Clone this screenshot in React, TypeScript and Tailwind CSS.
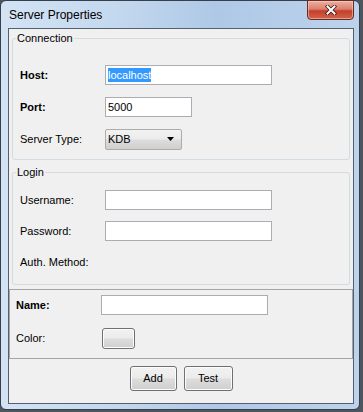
import type { ReactNode } from "react";

function TextBox({ width, children }: { width: string; children?: ReactNode }) {
  return (
    <div className={`flex h-[20px] items-center border border-[#abadb3] bg-white pl-[2px] ${width}`}>
      {children}
    </div>
  );
}

function Row({ label, bold, children }: { label: string; bold?: boolean; children?: ReactNode }) {
  return (
    <div className="flex h-[20px] items-center">
      <span className={`w-[85px] shrink-0 ${bold ? "font-bold" : ""}`}>{label}</span>
      {children}
    </div>
  );
}

function Group({ title, className, children }: { title: string; className: string; children: ReactNode }) {
  return (
    <fieldset className={`mx-[3px] rounded-[3px] border border-[#d3dbe2] pl-[7px] ${className}`}>
      <legend className="-ml-[4px] px-[1px] leading-[13px]">{title}</legend>
      {children}
    </fieldset>
  );
}

function WinButton({ label, width }: { label: string; width: string }) {
  return (
    <div
      className={`flex h-[25px] items-center justify-center rounded-[3px] border border-[#707070] bg-[linear-gradient(#f2f2f2_0%,#ebebeb_48%,#dddddd_52%,#cfcfcf_100%)] shadow-[inset_0_0_0_1px_#fcfcfc] ${width}`}
    >
      {label}
    </div>
  );
}

export default function App() {
  return (
    <div className="h-[412px] w-[363px] overflow-hidden bg-[#4e555d] font-['Liberation_Sans',Arial,sans-serif] text-[11px] text-black">
      <div className="flex h-[410px] w-[360px] flex-col rounded-[6px] border border-[#34404e] bg-[linear-gradient(to_right,#d3e3f4,#c2d7ee_35%,#aec8e6_60%,#bdd3ec_100%)]">
        {/* title bar */}
        <div className="flex h-[27px] shrink-0 items-start justify-between">
          <span className="mt-[7px] pl-[8px] text-[12px] leading-[14px]">Server Properties</span>
          <div className="-mt-[1px] mr-[5px] flex h-[20px] w-[47px] items-center justify-center rounded-b-[4px] border border-[#6b2a20] bg-[linear-gradient(#eab0a4_0%,#dc7f6c_45%,#c4402a_55%,#d2644c_100%)] shadow-[inset_0_0_0_1px_rgba(255,220,210,0.5)]">
            <svg width="12" height="10" viewBox="0 0 12 10">
              <path d="M2.5 1.5 L9.5 8.5 M9.5 1.5 L2.5 8.5" stroke="#3a1812" strokeWidth="3.6" strokeLinecap="square" />
              <path d="M2.5 1.5 L9.5 8.5 M9.5 1.5 L2.5 8.5" stroke="#ffffff" strokeWidth="2" strokeLinecap="square" />
            </svg>
          </div>
        </div>

        {/* client area */}
        <div className="mb-[5px] ml-[7px] mr-[5px] flex flex-1 flex-col border border-[#56606c] bg-[#f0f0f0]">
          <Group title="Connection" className="mt-[3px] pb-[10px] pt-[20px]">
            <div className="flex flex-col gap-[12px]">
              <Row label="Host:" bold>
                <TextBox width="w-[167px]">
                  <span className="bg-[#3399ff] leading-[14px] text-white">localhost</span>
                </TextBox>
              </Row>
              <Row label="Port:" bold>
                <TextBox width="w-[87px]">5000</TextBox>
              </Row>
              <Row label="Server Type:">
                <div className="flex h-[21px] w-[77px] items-center justify-between rounded-[2px] border border-[#acacac] bg-[linear-gradient(#f2f2f2_0%,#ebebeb_48%,#dddddd_52%,#cfcfcf_100%)] pl-[2px] pr-[6px]">
                  <span>KDB</span>
                  <svg width="8" height="5" viewBox="0 0 8 5">
                    <path d="M0 0 H7 L3.5 4 Z" fill="#000" />
                  </svg>
                </div>
              </Row>
            </div>
          </Group>

          <Group title="Login" className="mt-[6px] pb-[12px] pt-[11px]">
            <div className="flex flex-col gap-[11px]">
              <Row label="Username:">
                <TextBox width="w-[167px]" />
              </Row>
              <Row label="Password:">
                <TextBox width="w-[167px]" />
              </Row>
              <Row label="Auth. Method:" />
            </div>
          </Group>

          <div className="mt-[4px] flex h-[70px] flex-col border border-[#a5a5a5] pl-[6px] pt-[5px]">
            <div className="flex h-[20px] items-center">
              <span className="w-[85px] shrink-0 font-bold">Name:</span>
              <TextBox width="w-[167px]" />
            </div>
            <div className="mt-[13px] flex h-[21px] items-center">
              <span className="w-[85px] shrink-0">Color:</span>
              <div className="ml-[1px] h-[21px] w-[33px] rounded-[3px] border border-[#707070] bg-[linear-gradient(#f2f2f2_0%,#ebebeb_48%,#dddddd_52%,#cfcfcf_100%)] shadow-[inset_0_0_0_1px_#fcfcfc]" />
            </div>
          </div>

          <div className="mt-[7px] flex justify-center gap-[7px]">
            <WinButton label="Add" width="w-[47px]" />
            <WinButton label="Test" width="w-[49px]" />
          </div>
        </div>
      </div>
    </div>
  );
}
